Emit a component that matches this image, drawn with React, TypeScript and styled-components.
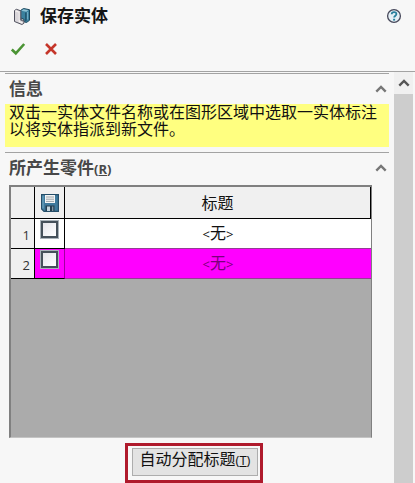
import React, { useState } from "react";
import styled, { createGlobalStyle } from "styled-components";

const GlobalStyle = createGlobalStyle`
  *, *::before, *::after { box-sizing: border-box; }
  body {
    margin: 0;
    background: #f7f7f7;
    color: #111;
    font-family: "Open Sans", "Noto Sans CJK SC", sans-serif;
    font-size: 16px;
  }
  button { font: inherit; color: inherit; }
`;

const Panel = styled.main`
  display: flex;
  flex-direction: column;
  height: 100vh;
  overflow: hidden;
`;

const Header = styled.header`
  flex: none;
  padding: 4px 13px 0 12px;
  height: 72px;
  border-bottom: 1px solid #a3a3a3;
`;

const TitleRow = styled.div`
  display: flex;
  align-items: center;
  height: 24px;
`;

const Title = styled.h1`
  flex: 1;
  margin: 0 0 0 8px;
  font-size: 17px;
  line-height: 24px;
  font-weight: 700;
  color: #151515;
`;

const IconButton = styled.button`
  display: flex;
  align-items: center;
  justify-content: center;
  padding: 0;
  border: 0;
  background: none;
  svg { display: block; }
`;

const Actions = styled.div`
  display: flex;
  gap: 18px;
  padding-top: 14px;
  margin-left: -2px;
`;

const Body = styled.div`
  display: flex;
  flex: 1;
  min-height: 0;
`;

const Sections = styled.div`
  flex: 1;
  min-width: 0;
  padding: 1px 5px 0;
`;

const Section = styled.section`
  border-top: 1px solid #a3a3a3;
`;

const SectionHead = styled.div`
  display: flex;
  align-items: center;
  justify-content: space-between;
  height: 30px;
  padding: 0 2px 0 4px;
`;

const SectionTitle = styled.h2`
  margin: 0;
  font-size: 17px;
  line-height: 24px;
  font-weight: 700;
  color: #484848;
`;

const Mnemonic = styled.span`
  font-size: 13px;
`;

const Message = styled.p`
  margin: 0 0 5px;
  padding: 0 4px;
  min-height: 43px;
  background: #ffff80;
  line-height: 17px;
`;

const Grid = styled.div`
  margin: 2px 17px 0 4px;
  min-height: 253px;
  border: 2px solid #808080;
  border-right-width: 1px;
  border-bottom: 1px solid #c4c4c4;
  background: #ababab;
`;

const Table = styled.table`
  width: 100%;
  border-collapse: separate;
  border-spacing: 0;
  table-layout: fixed;
`;

const HeadCell = styled.th<{ $width?: number }>`
  width: ${(p) => (p.$width ? `${p.$width}px` : "auto")};
  height: 32px;
  padding: 0;
  border-right: 1px solid #000;
  border-bottom: 1px solid #000;
  background: #f0f0f0;
  font-weight: 400;
  line-height: 20px;
  svg { display: block; margin: 0 auto; }
`;

const RowNumber = styled.th`
  height: 30px;
  padding: 2px 4px 0 0;
  border-right: 1px solid #000;
  border-bottom: 1px solid #000;
  background: #f0f0f0;
  font-size: 13px;
  line-height: 18px;
  font-weight: 400;
  text-align: right;
  color: #333;
`;

const CheckCell = styled.td<{ $selected: boolean }>`
  padding: 2px 0 0 6px;
  vertical-align: top;
  border-right: 1px solid ${(p) => (p.$selected ? "#a000a0" : "#000")};
  border-bottom: 1px solid #000;
  background: ${(p) => (p.$selected ? "#ff00ff" : "#fff")};
`;

const NameCell = styled.td<{ $selected: boolean }>`
  padding: 0;
  border-bottom: 1px solid #953c95;
  background: ${(p) => (p.$selected ? "#ff00ff" : "#fff")};
  color: ${(p) => (p.$selected ? "#7a007a" : "#111")};
  line-height: 20px;
  text-align: center;
`;

const Bracket = styled.span`
  font-size: 13px;
`;

const Check = styled.input`
  appearance: none;
  display: block;
  width: 17px;
  height: 17px;
  margin: 0;
  border: 2px solid #45505a;
  outline: 1px solid #a9b2b9;
  background: linear-gradient(135deg, #e4e4ea, #fff);
  &:checked { background: #2f6f9b; }
`;

const Footer = styled.div`
  display: flex;
  justify-content: center;
  padding: 5px 0 0;
  margin-right: 6px;
`;

const Highlight = styled.div`
  padding: 2px 2px 4px 4px;
  border: 3px solid #af1a2c;
`;

const AssignButton = styled.button`
  display: block;
  height: 28px;
  padding: 0 7px 6px;
  border: 1px solid #adadad;
  background: #e3e3e3;
  line-height: 20px;
  white-space: nowrap;
`;

const Scrollbar = styled.div`
  display: flex;
  flex-direction: column;
  flex: none;
  width: 19px;
  margin-right: 2px;
  background: #f0f0f0;
`;

const ScrollUp = styled(IconButton)`
  flex: none;
  height: 22px;
`;

const ScrollThumb = styled.div`
  flex: 1;
  background: #cdcdcd;
`;

const Chevron = ({ color }: { color: string }) => (
  <svg width="12" height="8" viewBox="0 0 12 8" aria-hidden="true">
    <path d="M1.3 6.6 6 2l4.7 4.6" fill="none" stroke={color} strokeWidth="2.4" />
  </svg>
);

const BodiesIcon = () => (
  <svg width="20" height="20" viewBox="0 0 20 20" aria-hidden="true">
    <path d="m8.5 4.5 3-2 6 1.2v10.6l-3 2.2-2.7-.8V13l-3.3-1z" fill="#3a819e" stroke="#1d4a60" />
    <path d="m9.3 4.8 2.3-1.5 4.7 1-2 1.5z" fill="#91c3d5" />
    <path d="M13.9 6.5v8.8" stroke="#173f54" />
    <path d="M15.6 6v7.5" stroke="#75b1c8" />
    <path d="m2.5 4.5 2-1.2 4.4 1.6v8.6l3 1.2v2.6l-2 1.2-7.4-3z" fill="#d9d6da" stroke="#50515e" />
    <path d="m3.2 4.8 4.1 1.5v9.4l3.2 1.3" fill="none" stroke="#f6f2f1" strokeWidth="1.2" />
    <path d="M8.4 5.8V14l3 1.2" fill="none" stroke="#6c6e7b" />
  </svg>
);

const HelpIcon = () => (
  <svg width="16" height="16" viewBox="0 0 16 16" aria-hidden="true">
    <circle cx="8" cy="8" r="6.4" fill="#e5f0f6" stroke="#47485a" strokeWidth="1.3" />
    <path d="M5.7 6.3c0-3 4.7-2.9 4.7-.2 0 1.6-2.3 1.6-2.3 3.5" fill="none" stroke="#287f9d" strokeWidth="1.8" />
    <path d="M7.1 10.8h2v1.8h-2z" fill="#287f9d" />
  </svg>
);

const AcceptIcon = () => (
  <svg width="16" height="14" viewBox="0 0 16 14" aria-hidden="true">
    <path d="m1.8 7.5 4 3.8L14.2 2" fill="none" stroke="#4b9434" strokeWidth="2.6" />
  </svg>
);

const CancelIcon = () => (
  <svg width="14" height="14" viewBox="0 0 14 14" aria-hidden="true">
    <path d="m2 2 10 10M12 2 2 12" fill="none" stroke="#c5362a" strokeWidth="2.6" />
  </svg>
);

const SaveIcon = () => (
  <svg width="18" height="18" viewBox="0 0 18 18" aria-hidden="true">
    <path d="M.6.6h16.8v16.8H3L.6 15z" fill="#3f7a9d" stroke="#254e69" strokeWidth="1.2" />
    <path d="M4 1h10v8H4z" fill="#f4f5f5" />
    <path d="M5 3h8M5 5.2h8M5 7.4h8" stroke="#929ca2" strokeWidth=".9" />
    <path d="M4.5 11.5h9V17h-9z" fill="#263f51" />
    <path d="M6 12.5h3V17H6z" fill="#c3d5dd" />
    <path d="M11 12.5h1.3V17H11z" fill="#8095a3" />
    <path d="M2 1.5v13" stroke="#78b0c9" />
  </svg>
);

const parts = [
  { id: 1, name: "无", selected: false },
  { id: 2, name: "无", selected: true },
];

export default function App() {
  const [saved, setSaved] = useState<number[]>([]);
  const toggle = (id: number) =>
    setSaved((ids) => (ids.includes(id) ? ids.filter((n) => n !== id) : [...ids, id]));

  return (
    <>
      <GlobalStyle />
      <Panel lang="zh-CN">
        <Header>
          <TitleRow>
            <BodiesIcon />
            <Title>保存实体</Title>
            <IconButton aria-label="帮助"><HelpIcon /></IconButton>
          </TitleRow>
          <Actions>
            <IconButton aria-label="确定"><AcceptIcon /></IconButton>
            <IconButton aria-label="取消"><CancelIcon /></IconButton>
          </Actions>
        </Header>
        <Body>
          <Sections>
            <Section>
              <SectionHead>
                <SectionTitle>信息</SectionTitle>
                <IconButton aria-label="折叠信息"><Chevron color="#777" /></IconButton>
              </SectionHead>
              <Message>双击一实体文件名称或在图形区域中选取一实体标注以将实体指派到新文件。</Message>
            </Section>
            <Section>
              <SectionHead>
                <SectionTitle>所产生零件<Mnemonic>(<u>R</u>)</Mnemonic></SectionTitle>
                <IconButton aria-label="折叠所产生零件"><Chevron color="#777" /></IconButton>
              </SectionHead>
              <Grid>
                <Table>
                  <thead>
                    <tr>
                      <HeadCell $width={24} />
                      <HeadCell $width={30} aria-label="保存"><SaveIcon /></HeadCell>
                      <HeadCell>标题</HeadCell>
                    </tr>
                  </thead>
                  <tbody>
                    {parts.map((part) => (
                      <tr key={part.id}>
                        <RowNumber scope="row">{part.id}</RowNumber>
                        <CheckCell $selected={part.selected}>
                          <Check
                            type="checkbox"
                            aria-label={`保存 ${part.id}`}
                            checked={saved.includes(part.id)}
                            onChange={() => toggle(part.id)}
                          />
                        </CheckCell>
                        <NameCell $selected={part.selected}>
                          <Bracket>&lt;</Bracket>{part.name}<Bracket>&gt;</Bracket>
                        </NameCell>
                      </tr>
                    ))}
                  </tbody>
                </Table>
              </Grid>
              <Footer>
                <Highlight>
                  <AssignButton>自动分配标题<Mnemonic>(<u>T</u>)</Mnemonic></AssignButton>
                </Highlight>
              </Footer>
            </Section>
          </Sections>
          <Scrollbar>
            <ScrollUp aria-label="向上滚动"><Chevron color="#555" /></ScrollUp>
            <ScrollThumb />
          </Scrollbar>
        </Body>
      </Panel>
    </>
  );
}
